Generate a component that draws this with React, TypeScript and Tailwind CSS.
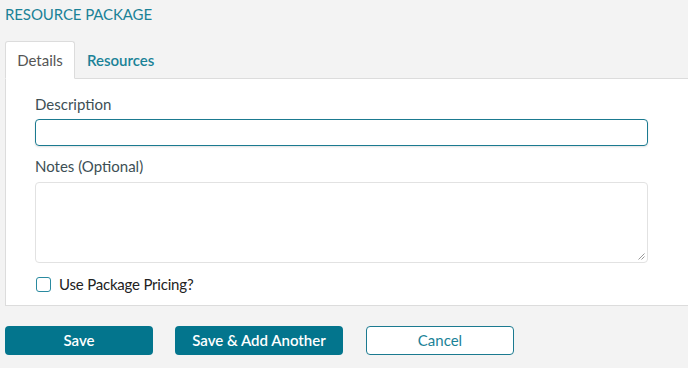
export default function App() {
  return (
    <div className="w-[688px] h-[368px] overflow-hidden bg-[#f3f3f3] font-['Lato',sans-serif]">
      <div className="w-[720px] pl-[5px]">
        <h1 className="pt-[4px] h-[41px] text-[15px] leading-[20px] text-[#1a8297] tracking-[-0.1px]">
          RESOURCE PACKAGE
        </h1>

        <div className="flex h-[37px] items-end">
          <div className="h-[38px] w-[70px] -mb-px bg-white border border-[#dcdcdc] border-b-white rounded-t-[3px] flex items-center justify-center text-[15px] text-[#555] z-10">
            Details
          </div>
          <div className="h-[37px] pt-[2px] px-[12px] flex items-center text-[15px] font-semibold text-[#1a8297]">
            Resources
          </div>
        </div>

        <div className="bg-white border border-[#dcdcdc] h-[228px] pl-[29px] pt-[15px]">
          <label className="block text-[15px] leading-[20px] text-[#3d4f55]">Description</label>
          <div className="mt-[5px] w-[613px] h-[27px] border border-[#1b7a90] rounded-[4px] shadow-[0_1px_2px_rgba(0,0,0,0.12)]" />

          <label className="block mt-[10px] text-[15px] leading-[20px] text-[#3d4f55]">Notes (Optional)</label>
          <div className="relative mt-[6px] w-[613px] h-[81px] border border-[#e2e2e2] rounded-[4px]">
            <svg className="absolute right-[2px] bottom-[2px]" width="7" height="7" viewBox="0 0 7 7">
              <path d="M6.5 0.5L0.5 6.5M6.5 3.5L3.5 6.5" stroke="#999" strokeWidth="1" />
            </svg>
          </div>

          <div className="mt-[10px] flex items-center">
            <div className="w-[15px] h-[15px] border-[1.5px] border-[#2a8aa0] rounded-[3px] ml-px" />
            <span className="ml-[8px] text-[15px] tracking-[-0.2px] text-[#222]">Use Package Pricing?</span>
          </div>
        </div>

        <div className="mt-[20px] flex gap-[22px]">
          <button className="w-[148px] h-[29px] bg-[#03758d] rounded-[4px] text-white text-[15px] font-semibold">
            Save
          </button>
          <button className="w-[168px] h-[29px] bg-[#03758d] rounded-[4px] text-white text-[15px] font-semibold">
            Save &amp; Add Another
          </button>
          <button className="w-[148px] h-[29px] bg-white border border-[#1b7a90] rounded-[4px] text-[#1a8297] text-[15px] ml-[1px]">
            Cancel
          </button>
        </div>
      </div>
    </div>
  );
}
